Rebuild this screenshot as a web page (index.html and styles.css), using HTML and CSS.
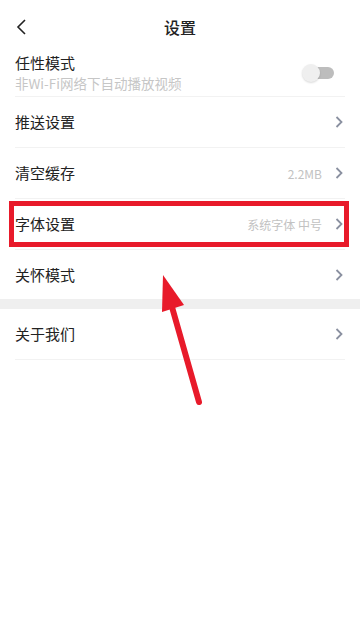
FILE: index.html
```html
<!DOCTYPE html>
<html lang="zh-CN">
<head>
  <meta charset="UTF-8" />
  <meta name="viewport" content="width=device-width, initial-scale=1.0"/>
  <title>设置</title>
  <link rel="stylesheet" href="styles.css">
</head>
<body>
  <div class="header">
    <span class="back">
      <svg width="12" height="16" viewBox="0 0 12 16"><path d="M10 1 L3 8 L10 15" fill="none" stroke="#222" stroke-width="1.6"/></svg>
    </span>
    <span class="title">设置</span>
    <span class="back"></span>
  </div>

  <div class="list">
    <div class="item item-tall">
      <div class="item-text">
        <div class="label">任性模式</div>
        <div class="sub">非Wi-Fi网络下自动播放视频</div>
      </div>
      <div class="toggle"><span class="knob"></span></div>
    </div>
    <div class="item">
      <span class="label">推送设置</span>
      <span class="arrow"><svg width="8" height="12" viewBox="0 0 8 12"><path d="M1.5 1 L6.5 6 L1.5 11" fill="none" stroke="#8a90a0" stroke-width="1.8"/></svg></span>
    </div>
    <div class="item">
      <span class="label">清空缓存</span>
      <span class="value">2.2MB</span>
      <span class="arrow"><svg width="8" height="12" viewBox="0 0 8 12"><path d="M1.5 1 L6.5 6 L1.5 11" fill="none" stroke="#8a90a0" stroke-width="1.8"/></svg></span>
    </div>
    <div class="item">
      <span class="label">字体设置</span>
      <span class="value">系统字体 中号</span>
      <span class="arrow"><svg width="8" height="12" viewBox="0 0 8 12"><path d="M1.5 1 L6.5 6 L1.5 11" fill="none" stroke="#8a90a0" stroke-width="1.8"/></svg></span>
    </div>
    <div class="item no-line">
      <span class="label">关怀模式</span>
      <span class="arrow"><svg width="8" height="12" viewBox="0 0 8 12"><path d="M1.5 1 L6.5 6 L1.5 11" fill="none" stroke="#8a90a0" stroke-width="1.8"/></svg></span>
    </div>
  </div>

  <div class="gap"></div>

  <div class="list">
    <div class="item">
      <span class="label">关于我们</span>
      <span class="arrow"><svg width="8" height="12" viewBox="0 0 8 12"><path d="M1.5 1 L6.5 6 L1.5 11" fill="none" stroke="#8a90a0" stroke-width="1.8"/></svg></span>
    </div>
  </div>

  <!-- annotation -->
  <div class="mark-box"></div>
  <svg class="mark-arrow" width="360" height="619" viewBox="0 0 360 619">
    <line x1="170" y1="300" x2="199" y2="402" stroke="#e81a2a" stroke-width="6" stroke-linecap="round"/>
    <polygon points="163,275 162,312 184,305" fill="#e81a2a"/>
  </svg>
</body>
</html>
```

FILE: styles.css
```css
body {
  margin: 0;
  background: #fff;
  font-family: "Noto Sans CJK SC", "Noto Sans", sans-serif;
  color: #222;
  position: relative;
  height: 619px;
  overflow: hidden;
}
.header {
  height: 47px;
  display: flex;
  align-items: center;
  justify-content: space-between;
  padding: 6px 15px 0;
  box-sizing: border-box;
}
.back {
  width: 30px;
  display: flex;
  align-items: center;
}
.title {
  font-size: 16px;
  font-weight: 500;
}
.list {
  padding: 0 15px;
}
.item {
  height: 50px;
  display: flex;
  align-items: center;
  border-bottom: 1px solid #f2f2f2;
}
.item.no-line {
  height: 49px;
  border-bottom: none;
}
.item-tall {
  height: 50px;
  padding-top: 2px;
  box-sizing: border-box;
}
.item-text {
  flex: 1;
}
.label {
  font-size: 15px;
  flex: 1;
  line-height: 20px;
}
.sub {
  font-size: 13.5px;
  color: #c6c6c6;
  line-height: 18px;
  margin-top: 1px;
}
.value {
  font-size: 12px;
  color: #c2c2c2;
  margin-right: 13px;
}
.arrow {
  display: flex;
  align-items: center;
  margin-right: 2px;
}
.toggle {
  position: relative;
  width: 28px;
  height: 12px;
  border-radius: 6px;
  background: #bdbdbd;
  margin-right: 11px;
}
.knob {
  position: absolute;
  left: -4px;
  top: -3px;
  width: 18px;
  height: 18px;
  border-radius: 50%;
  background: #efefef;
  box-shadow: 0 1px 2px rgba(0, 0, 0, 0.15);
}
.gap {
  height: 10px;
  background: #efefef;
}
.mark-box {
  position: absolute;
  left: 9px;
  top: 201px;
  width: 340px;
  height: 46px;
  border: 5px solid #e81a2a;
  box-sizing: border-box;
}
.mark-arrow {
  position: absolute;
  left: 0;
  top: 0;
  pointer-events: none;
}
```
